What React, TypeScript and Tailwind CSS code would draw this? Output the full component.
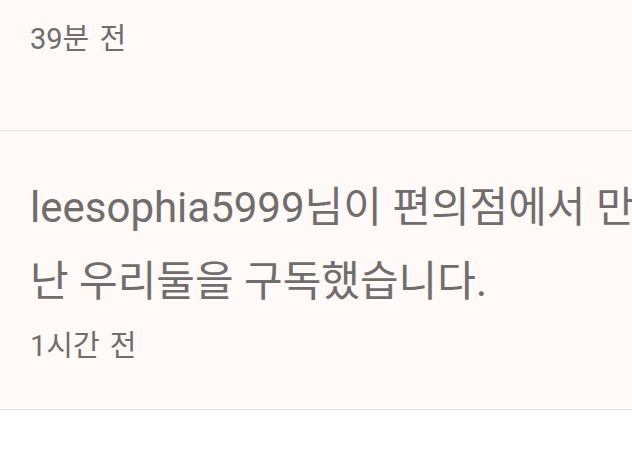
export default function App() {
  const font = { fontFamily: 'Roboto, "Noto Sans CJK KR", sans-serif' };
  return (
    <div className="w-[632px] h-[474px] overflow-hidden bg-white" style={font}>
      <div className="bg-[#fff9f8] h-[131px] px-[30px] pt-[18px] border-b border-[#e7e3e2]">
        <p className="text-[29px] leading-[42px] text-[#716d6c] [word-spacing:3px]">39분 전</p>
      </div>
      <div className="bg-[#fff9f8] h-[279px] pl-[30px] pt-[40px] border-b border-[#e7e3e2]">
        <div className="w-[620px]">
          <p className="text-[42px] leading-[74px] text-[#716d6c]">
            leesophia5999님이 편의점에서 만난 우리둘을 구독했습니다.
          </p>
          <p className="mt-[6px] text-[29px] leading-[42px] text-[#716d6c] [word-spacing:3px]">1시간 전</p>
        </div>
      </div>
    </div>
  );
}
